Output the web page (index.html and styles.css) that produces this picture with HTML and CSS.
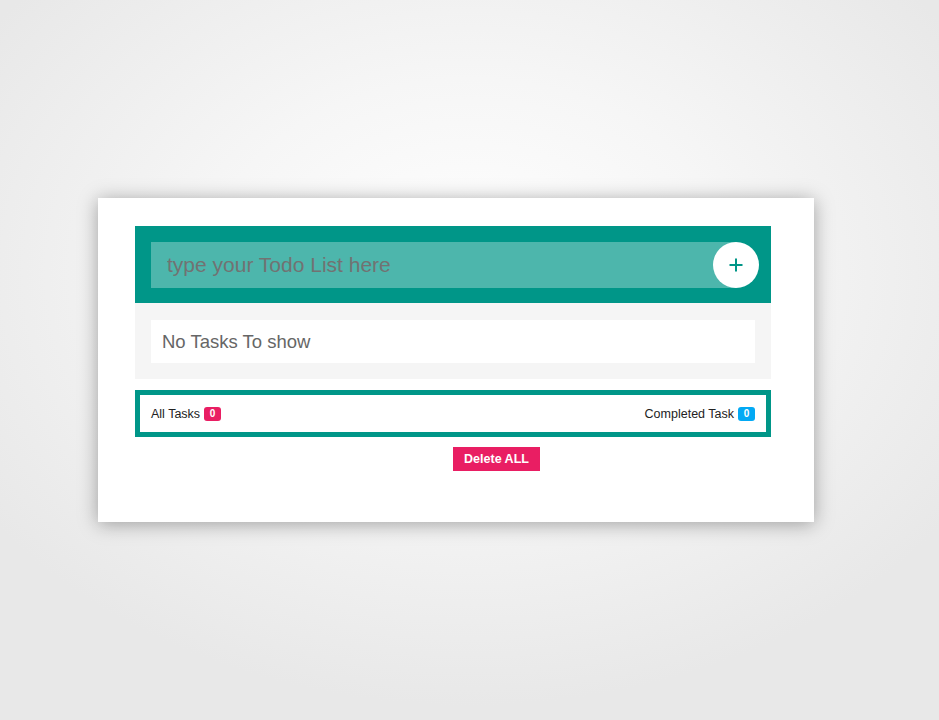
FILE: index.html
```html
<!DOCTYPE html>
<html lang="en">
<head>
<meta charset="utf-8">
<title>Todo List</title>
<link rel="stylesheet" href="styles.css">
</head>
<body>
  <div class="card">
    <div class="todo">
      <div class="todo-header">
        <input class="todo-input" type="text" placeholder="type your Todo List here">
        <button class="add-btn" aria-label="Add">
          <svg width="16" height="16" viewBox="0 0 16 16"><path d="M8 1.5V14.5M1.5 8H14.5" stroke="#009688" stroke-width="2" fill="none"/></svg>
        </button>
      </div>
      <div class="todo-list">
        <div class="empty">No Tasks To show</div>
      </div>
      <div class="todo-footer">
        <div class="stat">All Tasks <span class="badge badge-pink">0</span></div>
        <div class="stat">Completed Task <span class="badge badge-blue">0</span></div>
      </div>
      <div class="actions">
        <button class="delete-btn">Delete ALL</button>
      </div>
    </div>
  </div>
</body>
</html>
```

FILE: styles.css
```css
html, body {
  margin: 0;
  padding: 0;
  height: 100%;
}
body {
  width: 939px;
  height: 720px;
  overflow: hidden;
  background: radial-gradient(ellipse 62% 60% at 50% 38%, #ffffff 0%, #f6f6f6 45%, #e8e8e8 100%);
  font-family: "Liberation Sans", Arial, sans-serif;
  padding-top: 198px;
  box-sizing: border-box;
}
.card {
  margin-left: 98px;
  width: 716px;
  box-sizing: border-box;
  background: #fff;
  padding: 28px 43px 51px 37px;
  box-shadow: 0 2px 18px rgba(0, 0, 0, 0.34);
}
.todo {
  width: 636px;
}
.todo-header {
  background: #009688;
  display: flex;
  align-items: center;
  padding: 16px 12px 15px 16px;
}
.todo-input {
  flex: 1;
  min-width: 0;
  height: 46px;
  margin: 0 -23px 0 0;
  border: none;
  outline: none;
  background: #4db6ac;
  padding: 0 0 0 16px;
  box-sizing: border-box;
  font-family: "Liberation Sans", Arial, sans-serif;
  font-size: 21px;
  color: #333;
}
.todo-input::placeholder {
  color: #727272;
  opacity: 1;
}
.add-btn {
  position: relative;
  width: 46px;
  height: 46px;
  flex: none;
  border: none;
  border-radius: 50%;
  background: #fff;
  padding: 0;
  display: flex;
  align-items: center;
  justify-content: center;
}
.add-btn svg {
  display: block;
}
.todo-list {
  background: #f5f5f5;
  padding: 17px 16px 16px;
}
.empty {
  background: #fff;
  height: 43px;
  display: flex;
  align-items: center;
  padding-left: 11px;
  font-size: 18.5px;
  color: #666;
}
.todo-footer {
  margin-top: 11px;
  border: 5px solid #009688;
  height: 37px;
  display: flex;
  align-items: center;
  justify-content: space-between;
  padding: 0 11px;
  font-size: 12.5px;
  color: #222;
}
.stat {
  display: flex;
  align-items: center;
}
.badge {
  display: inline-flex;
  align-items: center;
  justify-content: center;
  width: 17px;
  height: 14px;
  margin-left: 4px;
  border-radius: 3px;
  color: #fff;
  font-weight: bold;
  font-size: 10px;
}
.badge-pink {
  background: #e91e63;
}
.badge-blue {
  background: #03a9f4;
}
.actions {
  margin-top: 10px;
  padding-left: 50%;
}
.delete-btn {
  display: block;
  width: 87px;
  height: 24px;
  border: none;
  background: #e91e63;
  color: #fff;
  font-family: "Liberation Sans", Arial, sans-serif;
  font-weight: bold;
  font-size: 12.5px;
  padding: 0;
}
```
